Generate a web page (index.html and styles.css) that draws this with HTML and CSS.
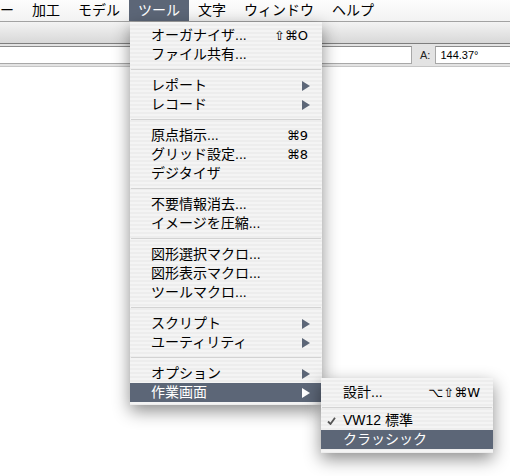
FILE: index.html
```html
<!DOCTYPE html>
<html lang="ja">
<head>
<meta charset="utf-8">
<title>ツール</title>
<link rel="stylesheet" href="styles.css">
</head>
<body>
<div class="screen">
  <div class="menubar">
    <span class="mtitle first">ー</span>
    <span class="mtitle">加工</span>
    <span class="mtitle">モデル</span>
    <span class="mtitle active">ツール</span>
    <span class="mtitle">文字</span>
    <span class="mtitle">ウィンドウ</span>
    <span class="mtitle">ヘルプ</span>
  </div>
  <div class="toolbar"></div>
  <div class="fieldbar">
    <div class="field wide"></div>
    <span class="flabel">A:</span>
    <div class="field angle">144.37°</div>
  </div>

  <div class="menu main">
    <div class="item"><span class="label">オーガナイザ...</span><span class="key">⇧⌘O</span></div>
    <div class="item"><span class="label">ファイル共有...</span></div>
    <div class="sep"></div>
    <div class="item"><span class="label">レポート</span><svg class="arrow" viewBox="0 0 8 10"><polygon points="0,0 8,5 0,10"/></svg></div>
    <div class="item"><span class="label">レコード</span><svg class="arrow" viewBox="0 0 8 10"><polygon points="0,0 8,5 0,10"/></svg></div>
    <div class="sep"></div>
    <div class="item"><span class="label">原点指示...</span><span class="key">⌘9</span></div>
    <div class="item"><span class="label">グリッド設定...</span><span class="key">⌘8</span></div>
    <div class="item"><span class="label">デジタイザ</span></div>
    <div class="sep"></div>
    <div class="item"><span class="label">不要情報消去...</span></div>
    <div class="item"><span class="label">イメージを圧縮...</span></div>
    <div class="sep"></div>
    <div class="item"><span class="label">図形選択マクロ...</span></div>
    <div class="item"><span class="label">図形表示マクロ...</span></div>
    <div class="item"><span class="label">ツールマクロ...</span></div>
    <div class="sep"></div>
    <div class="item"><span class="label">スクリプト</span><svg class="arrow" viewBox="0 0 8 10"><polygon points="0,0 8,5 0,10"/></svg></div>
    <div class="item"><span class="label">ユーティリティ</span><svg class="arrow" viewBox="0 0 8 10"><polygon points="0,0 8,5 0,10"/></svg></div>
    <div class="sep"></div>
    <div class="item"><span class="label">オプション</span><svg class="arrow" viewBox="0 0 8 10"><polygon points="0,0 8,5 0,10"/></svg></div>
    <div class="item hl"><span class="label">作業画面</span><svg class="arrow" viewBox="0 0 8 10"><polygon points="0,0 8,5 0,10"/></svg></div>
  </div>

  <div class="menu sub">
    <div class="item"><span class="check"></span><span class="label">設計...</span><span class="key">⌥⇧⌘W</span></div>
    <div class="sep"></div>
    <div class="item"><span class="check"><svg viewBox="0 0 9 8"><path d="M1 4.5 L3.5 7 L8 0.8"/></svg></span><span class="label">VW12 標準</span></div>
    <div class="item hl"><span class="check"></span><span class="label">クラッシック</span></div>
  </div>
</div>
</body>
</html>
```

FILE: styles.css
```css
html, body {
  margin: 0;
  padding: 0;
}

body {
  width: 510px;
  height: 476px;
  overflow: hidden;
  background: #ffffff;
  font-family: "Liberation Sans", "Noto Sans CJK JP", sans-serif;
  color: #000;
}

.screen {
  position: relative;
  width: 510px;
  height: 476px;
  overflow: hidden;
  background: #ffffff;
}

/* ---------- menu bar ---------- */
.menubar {
  display: flex;
  height: 21px;
  background: linear-gradient(#fdfdfd, #f2f2f2);
  border-bottom: 1px solid #a2a2a2;
  font-size: 14px;
  line-height: 21px;
}

.mtitle {
  padding: 0 9px;
  white-space: nowrap;
}

.mtitle.first {
  margin-left: -9px;
}

.mtitle.active {
  background: #5c6677;
  color: #fff;
}

/* ---------- toolbar ---------- */
.toolbar {
  height: 21px;
  background: linear-gradient(#f3f3f3, #d8d8d8);
  border-bottom: 1px solid #7e7e7e;
}

.fieldbar {
  display: flex;
  align-items: center;
  height: 22px;
  background: #e3e3e3;
  border-bottom: 1px solid #c6c6c6;
  font-size: 11px;
}

.field {
  box-sizing: border-box;
  height: 18px;
  background: #fff;
  border: 1px solid #a8a8a8;
  border-top-color: #8c8c8c;
  line-height: 16px;
}

.field.wide {
  width: 413px;
  margin-left: -1px;
}

.flabel {
  margin-left: 8px;
  margin-right: 5px;
  color: #222;
}

.field.angle {
  flex: 1;
  margin-right: -2px;
  padding-left: 4px;
}

/* ---------- menus ---------- */
.menu {
  position: absolute;
  box-sizing: border-box;
  background: repeating-linear-gradient(#f4f4f4 0, #f4f4f4 2px, #ededed 2px, #ededed 4px);
  box-shadow: 0 6px 16px rgba(0, 0, 0, 0.45);
  font-size: 14px;
}

.menu.main {
  left: 130px;
  top: 22px;
  width: 192px;
  padding: 4px 0 3px;
}

.menu.sub {
  left: 321px;
  top: 378px;
  width: 172px;
  padding: 5px 0 4px;
}

.item {
  display: flex;
  align-items: center;
  height: 19px;
  line-height: 19px;
  padding: 0 12px 0 21px;
  white-space: nowrap;
}

.item .label {
  flex: 1;
}

.item .key {
  font-family: "DejaVu Sans", sans-serif;
  font-size: 13px;
  margin-right: 2px;
}

.item.hl {
  background: #5c6677;
  color: #fff;
}

.arrow {
  width: 8px;
  height: 10px;
  fill: #5c6677;
}

.item.hl .arrow {
  fill: #fff;
}

.sep {
  height: 12px;
  margin: 0 1px;
  background: linear-gradient(transparent 5px, #d3d3d3 5px, #d3d3d3 6px, transparent 6px);
}

.sub .sep {
  height: 9px;
}

.sub .item {
  padding: 0 13px 0 6px;
}

.sub .item .key {
  margin-right: 0;
}

.check {
  display: flex;
  align-items: center;
  width: 16px;
  height: 19px;
}

.check svg {
  width: 9px;
  height: 8px;
  fill: none;
  stroke: #555;
  stroke-width: 1.8;
}
```
